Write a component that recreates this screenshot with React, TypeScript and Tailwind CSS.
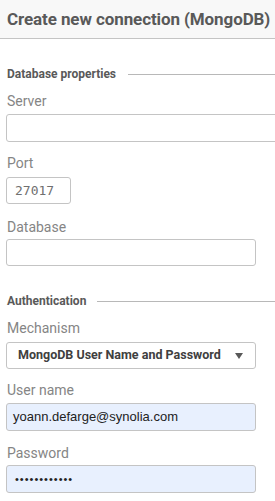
import React from "react";

const labelCls = "h-[16px] text-[14px] leading-[16px] text-[#858585] pl-[7px]";
const inputBase = "border border-[#c4c4c4] rounded-[3px] bg-white";

function Section({ title, gap }: { title: string; gap: string }) {
  return (
    <div className="h-[16px] flex items-center pl-[7px]">
      <span className="text-[12px] leading-[16px] font-bold text-[#595959] whitespace-nowrap">{title}</span>
      <div className={`flex-1 h-px bg-[#b8b8b8] ${gap}`} />
    </div>
  );
}

export default function App() {
  return (
    <div className="w-[275px] h-[501px] overflow-hidden bg-white" style={{ fontFamily: 'Roboto, sans-serif' }}>
      <div className="h-[39px] bg-[#f8f8f8] border-b border-[#c4c4c4] flex items-center pl-[7px] pt-[1px]">
        <span className="text-[17px] font-bold text-[#595959] whitespace-nowrap tracking-[-0.1px]">Create new connection (MongoDB)</span>
      </div>
      <div className="mt-[27px]">
        <Section title="Database properties" gap="ml-[12px]" />
      </div>
      <div className={`${labelCls} mt-[11px]`}>Server</div>
      <div className={`${inputBase} h-[28px] ml-[6px] w-[290px] mt-[5px]`} />
      <div className={`${labelCls} mt-[13px]`}>Port</div>
      <div
        className={`${inputBase} h-[27px] ml-[6px] w-[65px] mt-[6px] flex items-center pl-[8px] text-[13px] text-[#707070]`}
        style={{ fontFamily: '"DejaVu Sans Mono", monospace' }}
      >
        27017
      </div>
      <div className={`${labelCls} mt-[15px]`}>Database</div>
      <div className={`${inputBase} h-[27px] ml-[6px] w-[250px] mt-[4px]`} />
      <div className="mt-[27px]">
        <Section title="Authentication" gap="ml-[11px]" />
      </div>
      <div className={`${labelCls} mt-[11px]`}>Mechanism</div>
      <div className={`${inputBase} h-[27px] ml-[6px] w-[250px] mt-[6px] flex items-center justify-between pl-[11px] pr-[12px]`}>
        <span className="text-[12.5px] font-bold text-[#404040] whitespace-nowrap">MongoDB User Name and Password</span>
        <svg width="8" height="6" viewBox="0 0 8 6">
          <path d="M0 0 H8 L4 6 Z" fill="#595959" />
        </svg>
      </div>
      <div className={`${labelCls} mt-[13px]`}>User name</div>
      <div
        className="h-[28px] border border-[#c4c4c4] rounded-[3px] bg-[#e8f0fe] ml-[6px] w-[250px] mt-[5px] flex items-center pl-[6px] text-[13px] text-[#222]"
        style={{ fontFamily: '"Liberation Sans", sans-serif' }}
      >
        yoann.defarge@synolia.com
      </div>
      <div className={`${labelCls} mt-[14px]`}>Password</div>
      <div
        className="h-[28px] border border-[#c4c4c4] rounded-[3px] bg-[#e8f0fe] ml-[6px] w-[250px] mt-[4px] flex items-center pl-[8px] text-[11px] text-[#222] tracking-[1px]"
        style={{ fontFamily: '"Liberation Sans", sans-serif' }}
      >
        ••••••••••••
      </div>
    </div>
  );
}
